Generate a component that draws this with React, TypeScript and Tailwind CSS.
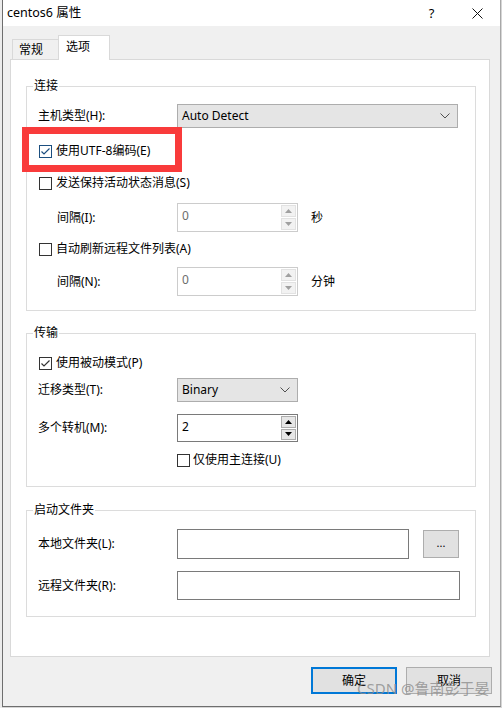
import React from 'react';

const CheckBox: React.FC<{ checked?: boolean; focus?: boolean }> = ({ checked, focus }) => {
  const color = focus ? '#1c4f80' : '#333333';
  return (
    <div
      className={
        focus
          ? 'w-[13px] h-[13px] border border-[#1c4f80] bg-white shrink-0'
          : 'w-[13px] h-[13px] border border-[#333333] bg-white shrink-0'
      }
    >
      {checked && (
        <svg width="11" height="11" viewBox="0 0 11 11">
          <path d="M1.5 5.5 L4 8 L9.5 2.5" fill="none" stroke={color} strokeWidth="1.2" />
        </svg>
      )}
    </div>
  );
};

const Chevron: React.FC = () => (
  <svg width="10" height="6" viewBox="0 0 10 6">
    <path d="M0.5 0.5 L5 5 L9.5 0.5" fill="none" stroke="#505050" strokeWidth="1" />
  </svg>
);

const Tri: React.FC<{ up?: boolean; color: string }> = ({ up, color }) => (
  <svg width="7" height="4" viewBox="0 0 7 4">
    {up ? <path d="M0 4 L3.5 0 L7 4 Z" fill={color} /> : <path d="M0 0 L3.5 4 L7 0 Z" fill={color} />}
  </svg>
);

const SpinBox: React.FC<{ value: string; disabled?: boolean; tall?: boolean }> = ({ value, disabled, tall }) => (
  <div
    className={
      (disabled ? 'border-[#cccccc] text-[#6d6d6d] ' : 'border-[#7a7a7a] text-black ') +
      (tall ? 'h-[29px] ' : 'h-[28px] ') +
      'w-[121px] border bg-white flex'
    }
  >
    <div className="flex-1 pl-[4px] pt-[4px]">{value}</div>
    <div className="w-[17px] flex flex-col gap-px p-px">
      <div
        className={
          disabled
            ? 'flex-1 flex items-center justify-center bg-[#f2f2f2] border border-[#e2e2e2]'
            : 'flex-1 flex items-center justify-center bg-[#e6e6e6] border border-[#adadad]'
        }
      >
        <Tri up color={disabled ? '#a0a0a0' : '#000000'} />
      </div>
      <div
        className={
          disabled
            ? 'flex-1 flex items-center justify-center bg-[#f2f2f2] border border-[#e2e2e2]'
            : 'flex-1 flex items-center justify-center bg-[#e6e6e6] border border-[#adadad]'
        }
      >
        <Tri color={disabled ? '#a0a0a0' : '#000000'} />
      </div>
    </div>
  </div>
);

const Group: React.FC<{ title: string; className: string; children: React.ReactNode }> = ({ title, className, children }) => (
  <div className={'relative w-[450px] border border-[#dcdcdc] ' + className}>
    <span className="absolute left-[6px] -top-[9px] px-px bg-white leading-[16px]">{title}</span>
    <div className="flex flex-col pl-[11px]">{children}</div>
  </div>
);

export default function App() {
  return (
    <div className="relative w-[502px] h-[708px] flex bg-[#d6d6d6] overflow-hidden font-['Noto_Sans','Noto_Sans_CJK_SC',sans-serif] text-[12px] leading-[16px] text-black">
      <div className="w-[2px] bg-[#ececec]" />
      <div className="w-[499px] h-[707px] flex flex-col border-l border-r border-b border-l-[#6e6e6e] border-r-[#a8a8a8] border-b-[#6e6e6e]">
        {/* title bar */}
        <div className="h-[26px] bg-white flex items-center">
          <span className="pl-[4px] text-[12.5px]">centos6 属性</span>
          <div className="ml-auto flex h-full">
            <div className="w-[45px] flex items-center justify-center text-[13px]">?</div>
            <div className="w-[46px] flex items-center justify-center">
              <svg width="11" height="11" viewBox="0 0 11 11">
                <path d="M0.5 0.5 L10.5 10.5 M10.5 0.5 L0.5 10.5" stroke="#111111" strokeWidth="1" />
              </svg>
            </div>
          </div>
        </div>

        <div className="flex-1 bg-[#f0f0f0] flex flex-col pl-[7px]">
          {/* tabs */}
          <div className="mt-[9px] h-[24px] flex items-end pl-[2px]">
            <div className="w-[46px] h-[20px] border-t border-l border-[#d9d9d9] flex items-center pl-[6px]">常规</div>
            <div className="relative w-[52px] h-[25px] -mb-px border-t border-l border-r border-[#d9d9d9] bg-white flex items-center pl-[7px] pb-[3px]">
              选项
            </div>
          </div>

          {/* panel */}
          <div className="w-[480px] h-[598px] bg-white border border-[#d9d9d9] pt-[26px] pl-[15px] flex flex-col">
            <Group title="连接" className="h-[225px]">
              <div className="mt-[17px] h-[24px] flex items-center">
                <span className="w-[139px]">主机类型(H):</span>
                <div className="w-[281px] h-[24px] bg-[#e5e5e5] border border-[#adadad] flex items-center justify-between pl-[4px] pr-[7px]">
                  <span>Auto Detect</span>
                  <Chevron />
                </div>
              </div>
              <div className="mt-[11px] h-[24px] flex items-center pl-px gap-[4px]">
                <CheckBox checked focus />
                <span>使用UTF-8编码(E)</span>
              </div>
              <div className="mt-[8px] h-[24px] flex items-center pl-px gap-[4px]">
                <CheckBox />
                <span>发送保持活动状态消息(S)</span>
              </div>
              <div className="mt-[8px] h-[29px] flex items-center">
                <span className="w-[139px] pl-[19px]">间隔(I):</span>
                <SpinBox value="0" disabled tall />
                <span className="ml-[13px]">秒</span>
              </div>
              <div className="mt-[5px] h-[24px] flex items-center pl-px gap-[4px]">
                <CheckBox />
                <span>自动刷新远程文件列表(A)</span>
              </div>
              <div className="mt-[6px] h-[29px] flex items-center">
                <span className="w-[139px] pl-[19px]">间隔(N):</span>
                <SpinBox value="0" disabled tall />
                <span className="ml-[13px]">分钟</span>
              </div>
              {/* annotation box */}
              <div className="absolute left-[-5px] top-[40px] w-[160px] h-[45px] border-[7px] border-[#f93b3b]" />
            </Group>

            <Group title="传输" className="mt-[22px] h-[154px]">
              <div className="mt-[17px] h-[24px] flex items-center pl-px gap-[4px]">
                <CheckBox checked />
                <span>使用被动模式(P)</span>
              </div>
              <div className="mt-[3px] h-[24px] flex items-center">
                <span className="w-[139px]">迁移类型(T):</span>
                <div className="w-[121px] h-[24px] bg-[#e5e5e5] border border-[#adadad] flex items-center justify-between pl-[4px] pr-[7px]">
                  <span>Binary</span>
                  <Chevron />
                </div>
              </div>
              <div className="mt-[12px] h-[28px] flex items-center">
                <span className="w-[139px]">多个转机(M):</span>
                <SpinBox value="2" />
              </div>
              <div className="mt-[6px] h-[24px] flex items-center pl-[139px] gap-[3px]">
                <CheckBox />
                <span>仅使用主连接(U)</span>
              </div>
            </Group>

            <Group title="启动文件夹" className="mt-[23px] h-[107px]">
              <div className="mt-[18px] h-[30px] flex items-center">
                <span className="w-[139px]">本地文件夹(L):</span>
                <div className="w-[232px] h-[30px] border border-[#7a7a7a] bg-white" />
                <div className="ml-[14px] w-[36px] h-[28px] bg-[#e1e1e1] border border-[#adadad] flex items-center justify-center text-[11px] pb-[2px]">
                  ...
                </div>
              </div>
              <div className="mt-[12px] h-[29px] flex items-center">
                <span className="w-[139px]">远程文件夹(R):</span>
                <div className="w-[283px] h-[29px] border border-[#7a7a7a] bg-white" />
              </div>
            </Group>
          </div>

          {/* buttons */}
          <div className="mt-[10px] flex justify-end gap-[9px] pr-[8px]">
            <div className="w-[86px] h-[27px] bg-[#e1e1e1] border-2 border-[#0078d7] flex items-center justify-center">确定</div>
            <div className="w-[86px] h-[27px] bg-[#e1e1e1] border border-[#adadad] flex items-center justify-center">取消</div>
          </div>
        </div>
      </div>

      {/* watermark */}
      <span className="absolute left-[357px] top-[680px] text-[15px] leading-[16px] text-[#8c8c8c]/80">CSDN @鲁南彭于晏</span>
    </div>
  );
}
